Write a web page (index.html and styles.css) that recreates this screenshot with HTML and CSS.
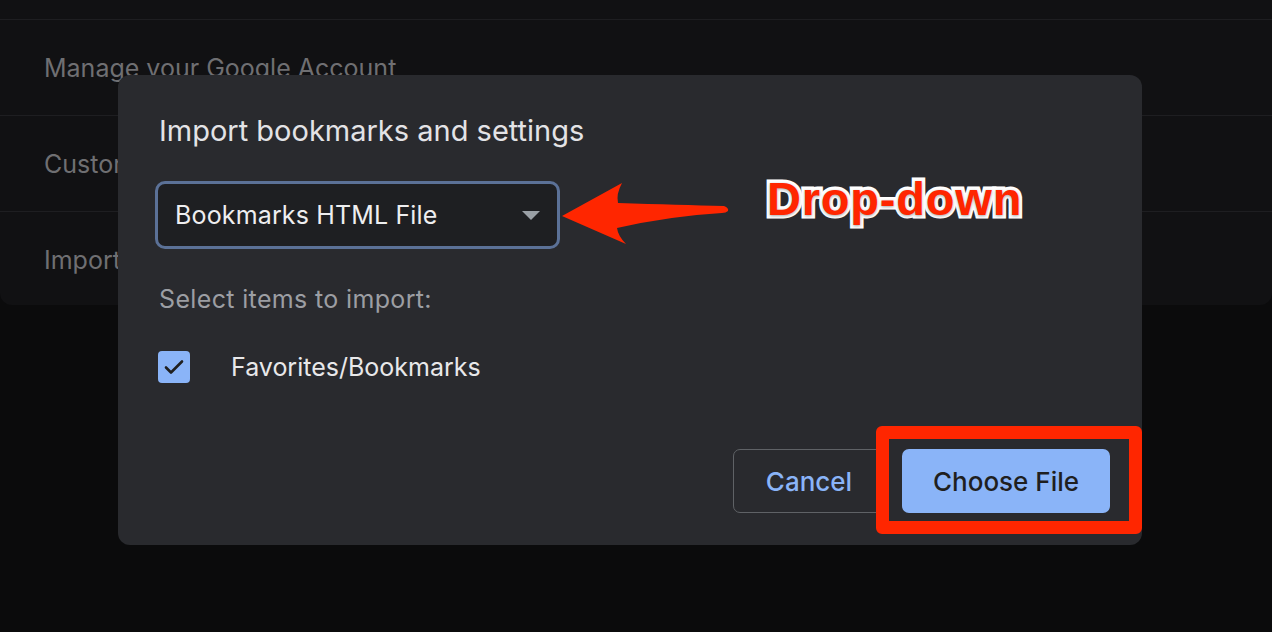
FILE: index.html
```html
<!DOCTYPE html>
<html lang="en">
<head>
<meta charset="utf-8">
<title>Import bookmarks and settings</title>
<link rel="stylesheet" href="styles.css">
</head>
<body>
<div class="page">
  <div class="settings-card">
    <div class="row">Manage your Google Account</div>
    <div class="row">Customize your Chrome profile</div>
    <div class="row">Import bookmarks and settings</div>
  </div>
</div>

<div class="dialog">
  <h1 class="title">Import bookmarks and settings</h1>
  <div class="select">
    <span class="select-text">Bookmarks HTML File</span>
    <svg class="caret" width="18" height="9" viewBox="0 0 18 9"><path d="M0 0 H18 L9 9 Z" fill="#9aa0a6"/></svg>
  </div>
  <div class="subhead">Select items to import:</div>
  <label class="check-row">
    <span class="checkbox">
      <svg width="32" height="32" viewBox="0 0 32 32"><path d="M8 16.5 L13 21.5 L24 10.5" fill="none" stroke="#1f1f1f" stroke-width="2.6" stroke-linecap="round" stroke-linejoin="round"/></svg>
    </span>
    <span class="check-label">Favorites/Bookmarks</span>
  </label>
  <div class="actions">
    <button class="btn btn-cancel">Cancel</button>
    <button class="btn btn-primary">Choose File</button>
  </div>
</div>

<div class="highlight-box"></div>

<svg class="arrow" width="180" height="70" viewBox="555 180 180 70">
  <path d="M562 216 L622 183 Q616 194 618 203 Q680 205 724 206 Q729 208 728 211 Q726 213 722 213 Q670 216 617 228 Q618 236 626 244 Z" fill="#ff2600"/>
</svg>

<div class="callout">Drop-down</div>
</body>
</html>
```

FILE: styles.css
```css
* { box-sizing: border-box; }

html, body {
  margin: 0;
  padding: 0;
}

body {
  width: 1272px;
  height: 632px;
  overflow: hidden;
  background: #0b0b0c;
  font-family: Inter, "Noto Sans", "Liberation Sans", sans-serif;
  position: relative;
}

.settings-card {
  background: #111113;
  height: 305px;
  border-radius: 0 0 12px 12px;
  padding-top: 19px;
}

.row {
  height: 96px;
  border-top: 1px solid #1e1e21;
  color: #6f6f72;
  font-size: 25px;
  padding-left: 44px;
  display: flex;
  align-items: center;
}

.dialog {
  position: absolute;
  left: 118px;
  top: 75px;
  width: 1024px;
  height: 470px;
  background: #292a2e;
  border-radius: 12px;
  padding: 0 32px 32px 41px;
  display: flex;
  flex-direction: column;
}

.title {
  margin: 38px 0 0 0;
  font-size: 29px;
  font-weight: 400;
  color: #e3e3e6;
  line-height: 35px;
}

.select {
  margin-top: 33px;
  margin-left: -4px;
  width: 405px;
  height: 68px;
  border: 3px solid #5b7197;
  border-radius: 10px;
  background: #1e1f22;
  display: flex;
  align-items: center;
  justify-content: space-between;
  padding: 0 17px 0 17px;
}

.select-text {
  font-size: 25px;
  color: #eeeef0;
  letter-spacing: 0.15px;
}

.caret { display: block; margin-top: 1px; }

.subhead {
  margin-top: 35px;
  font-size: 25px;
  color: #9c9ea3;
  line-height: 30px;
  letter-spacing: 0.35px;
}

.check-row {
  margin-top: 37px;
  display: flex;
  align-items: center;
  gap: 41px;
  margin-left: -1px;
}

.checkbox {
  width: 32px;
  height: 32px;
  border-radius: 4px;
  background: #8ab4f8;
  display: block;
}

.checkbox svg { display: block; }

.check-label {
  font-size: 25px;
  color: #e8e8ea;
}

.actions {
  margin-top: auto;
  display: flex;
  justify-content: flex-end;
  gap: 17px;
}

.btn {
  height: 64px;
  border-radius: 7px;
  font-family: Inter, "Noto Sans", "Liberation Sans", sans-serif;
  font-size: 26px;
  font-weight: 500;
  cursor: pointer;
  padding: 0;
}

.btn-cancel {
  width: 152px;
  background: transparent;
  border: 1.5px solid #5f6266;
  color: #8ab4f8;
}

.btn-primary {
  width: 208px;
  background: #8ab4f8;
  border: none;
  color: #1f1f1f;
}

.highlight-box {
  position: absolute;
  left: 876px;
  top: 426px;
  width: 266px;
  height: 108px;
  border: 13px solid #ff2600;
  border-radius: 6px;
}

.arrow {
  position: absolute;
  left: 555px;
  top: 180px;
}

.callout {
  position: absolute;
  left: 767px;
  top: 171px;
  font-family: "Liberation Sans", Arial, sans-serif;
  font-weight: 700;
  font-size: 47px;
  line-height: 56px;
  color: #ff2600;
  -webkit-text-stroke: 7px #ffffff;
  paint-order: stroke fill;
  text-shadow: 0 1px 3px rgba(0,0,0,0.35);
  letter-spacing: 0.8px;
}
```
